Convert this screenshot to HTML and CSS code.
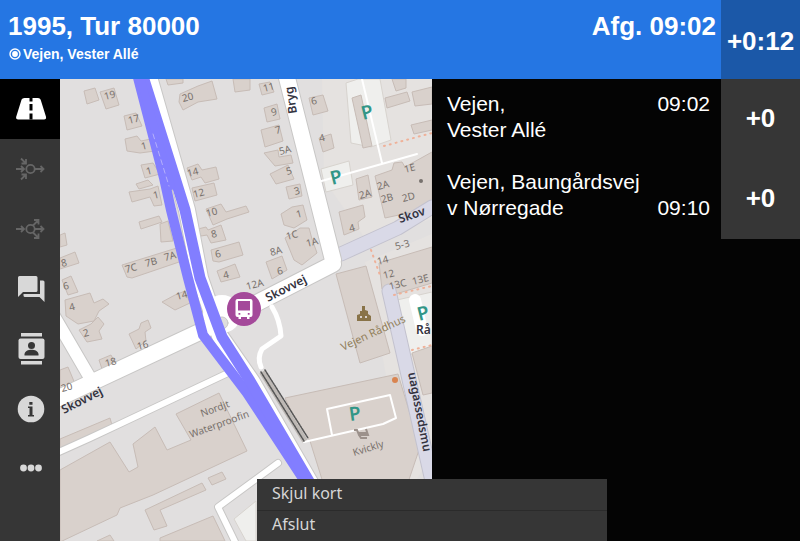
FILE: index.html
```html
<!DOCTYPE html>
<html lang="da">
<head>
<meta charset="utf-8">
<meta name="viewport" content="width=device-width, initial-scale=1">
<title>1995, Tur 80000</title>
<link rel="stylesheet" href="styles.css">
</head>
<body>
<header class="topbar">
  <div class="trip">
    <h1 class="trip-title">1995, Tur 80000</h1>
    <p class="trip-stop">
      <svg class="stop-mark" viewBox="0 0 12 12" aria-hidden="true"><circle cx="6" cy="6" r="5" fill="none" stroke="#fff" stroke-width="1.4"/><circle cx="6" cy="6" r="2.9" fill="#fff"/></svg>
      <span>Vejen, Vester Allé</span>
    </p>
  </div>
  <div class="departure">Afg. 09:02</div>
  <div class="deviation">+0:12</div>
</header>
<main class="content">
  <nav class="sidebar" aria-label="Menu">
    <button class="nav-button active" aria-label="Rute">
      <svg viewBox="0 0 32 24"><path fill="#fff" d="M9.500 1h13.500q2 0 2.700 1.800l5.300 17q.6 2.700-2 2.700H3.200q-2.600 0-2-2.700l5.300-17Q7.200 1 9.500 1z"/><path stroke="#000" stroke-width="3" d="M16 1v3.500M16 7v6.500M16 16.500v6"/></svg>
    </button>
    <button class="nav-button" aria-label="Ankomster" disabled>
      <svg viewBox="0 0 32 24" fill="none" stroke="#666" stroke-width="1.800"><circle cx="15.500" cy="12" r="4.200"/><path d="M1 12h8M6 9l3 3-3 3M20 12h8.500M25.500 9l3 3-3 3M6 1.500l5 5M11 2v4.500H6.500M6 22.500l5-5M6.500 17.500H11V22"/></svg>
    </button>
    <button class="nav-button" aria-label="Afgange" disabled>
      <svg viewBox="0 0 32 24" fill="none" stroke="#666" stroke-width="1.800"><circle cx="15.500" cy="12" r="4.200"/><path d="M1 12h8M6 9l3 3-3 3M20 12h8.500M25.500 9l3 3-3 3M18 8.500l5.500-5.500M19 3h4.500v4.500M18 15.500l5.500 5.500M19 21h4.500v-4.500"/></svg>
    </button>
    <button class="nav-button" aria-label="Beskeder">
      <svg viewBox="0 0 32 28"><path fill="#d8d8d8" d="M4.500 1H21q1.500 0 1.500 1.500v13q0 1.500-1.500 1.500H8l-5 5V2.500Q3 1 4.500 1zM25 5.500h3q1.500 0 1.500 1.500v20l-5-5H10q-1.500 0-1.500-1.500V19H25z"/></svg>
    </button>
    <button class="nav-button" aria-label="Kontakter">
      <svg viewBox="0 0 32 32"><path fill="#d8d8d8" d="M6 0h21v3.500H6zM6 28h21v3.500H6z"/><rect x="3.500" y="5.500" width="26" height="20.500" rx="2" fill="#d8d8d8"/><circle cx="16.500" cy="12.500" r="3.500" fill="#363636"/><path fill="#363636" d="M9.500 22.500v-1.200c0-3.200 4-4.600 7-4.600s7 1.400 7 4.600v1.200z"/></svg>
    </button>
    <button class="nav-button" aria-label="Information">
      <svg viewBox="0 0 32 28"><circle cx="16" cy="14" r="13.300" fill="#d8d8d8"/><path fill="#363636" d="M13 11.500h4.500v8.500H19v1.500h-6V20h1.500v-7H13zM14.300 7h3.200v2.800h-3.200z"/></svg>
    </button>
    <button class="nav-button" aria-label="Mere">
      <svg viewBox="0 0 32 10"><g fill="#d8d8d8"><circle cx="8.500" cy="4" r="3.400"/><circle cx="16" cy="4" r="3.400"/><circle cx="23.500" cy="4" r="3.400"/></g></svg>
    </button>
  </nav>
  <section class="map" aria-label="Kort">
    <svg class="map-drawing" viewBox="60 79 372 462" preserveAspectRatio="xMinYMin slice">
      <rect x="60" y="79" width="372" height="462" fill="#e1dfdf"/>
      <!-- light grounds -->
      <g fill="#e5e2e0">
        <path d="M322 79h110v140l-66 21-42-60z"/>
        <path d="M365 262l67-28v220l-24 40z"/>
      </g>
      <g fill="#efefed" stroke="#d7d3ce" stroke-width="1">
        <path d="M346 83l12-4h22l11 61-20 7-20-4z"/>
        <path d="M321 169l28-8 4 24-27 7z"/>
        <path d="M397 300l35-8v58l-24 5z"/>
        <path d="M234 519l22-18v40h-10z"/>
      </g>
      <g fill="#d9d1cc" stroke="#c7bcb6" stroke-width="1">
        <path d="M84 91l11-3 4 12-12 4zM100 92l14-4 5 17-13 4z"/>
        <path d="M166 79h17v4l-15 2zM180 94l18-8 14-5 5 18-19 3-15 8-4-8z"/>
        <path d="M233 79h17v11l-15 2z"/>
        <path d="M124 116l12-3 6 13-15 4zM125 139l12-3 4 5 10-2 4 12-15 2-13-2z"/>
        <path d="M141 165l12-2 7 11-15 4zM136 184l12-4 5 5-14 4zM129 192l21-3 8-3 4 19-8 1-4-9-18 5z"/>
        <path d="M139 222l20-6 3 6-21 7zM160 224l8-3 5 20-12 1z"/>
        <path d="M122 265l58-18 5 13-53 18-5-1z"/>
        <path d="M187 168l11-4 4 6 14-3 3 12-14 4-4-6-9 3zM192 188l22-5 3 12-22 6zM206 209l15-5 5 8 20-6 3 6-22 7-14 6zM198 229l8-2 2 3 13-5 5 15-15 3-4-8-6 1zM211 250l28-8 4 13-24 7-6-1zM217 271l18-7 5 13-19 5z"/>
        <path d="M60 235l5-2 2 12-7 2zM60 258l15-6 4 11-19 6zM62 280l9-4 7 16-10 3zM65 300l25-7 4 10 9-4 6 5-10 7-5 10-16 3-12-8z"/>
        <path d="M79 330l12-6 7-7 6 7-5 7 3 8-15 3zM129 334l10-5 2-6 7-3 3 8-6 4 1 9-10 8zM99 360l12-5 6 12-14 5zM60 370l8-3 10 24-18 7zM162 302l13-7 10-4 5 12-15 7z"/>
        <path d="M259 84l11-2 4 10-12 3zM264 108l13-4 3 15-13 3zM261 130l18-5 4 16-18 6zM264 153l14-3 1 7 12-2 2 8-18 3zM270 174l18-9 6 14-18 5zM286 187l14-3 2 12-13 3zM281 214l11-7 11-2 4 15-13 8-10-3z"/>
        <path d="M309 98l14-3 5 16-15 4zM319 138l12-4 3 14-11 4zM285 238l15-10 9 0 3 11 5 14-15 12-8-5zM266 262l16-6 5 14-15 9z"/>
        <path d="M352 98l9-3 11 51-9 2zM385 98l22-6 3 9-23 7zM392 79h14v9l-10 3zM412 92l20-5v17l-17 2zM411 125l21-5v10l-18 4z"/>
        <path d="M375 176l17-6 2-7 8-1 3 5 27-15v50l-10 8-37 8zM356 179l12-4 4 22-13 3zM339 212l24-7 2 12-7 5 1 7-15 6z"/>
        <path d="M379 263l53-16v36l-43 13-7-7zM336 274l30-8 24 87-30 10z"/>
        <path d="M412 353l20-7v47l-9 2z"/>
        <path d="M285 398l113-24 22 73-25 74H335l-25-80-16-24z"/>
        <path d="M60 439l50-21 3 11-44 21-9 1z"/>
        <path d="M60 470l50-28 19 30 9-5-5-23 22-17 12 23 24-10-15-26 43-21 28 58-94 44-33 13-3 7-57 27v-67z"/>
        <path d="M145 510l57-27 4 7-46 20 7 16-13 4zM208 478l14-6 4 7-14 6zM160 538l53-22 12 25h-65z"/>
        <path d="M97 541l13-6 4 6z"/>
      </g>
      <!-- roads -->
      <g fill="none" stroke-linecap="round" stroke-linejoin="round">
        <path d="M341 254l57-26 34-21M389 291l43 190" stroke="#c3c2ce" stroke-width="15"/>
        <path d="M341 254l57-26 34-21M389 291l43 190" stroke="#d9d9e7" stroke-width="13"/>
        <g stroke="#c8c7c6">
          <path d="M147 70l40 140 13 68 20 58 32 46 60 104M283 62l50 198M48 403l160-75 125-64" stroke-width="18"/>
          <path d="M54 316l39 67" stroke-width="14"/>
          <path d="M50 456l40-18 32-15 106-50M278 463l-60 44 22 45" stroke-width="8"/>
        </g>
        <g stroke="#fff">
          <path d="M147 70l40 140 13 68 20 58 32 46 60 104M283 62l50 198M48 403l160-75 125-64" stroke-width="16"/>
          <path d="M54 316l39 67" stroke-width="12"/>
          <path d="M50 456l40-18 32-15 106-50M278 463l-60 44 22 45" stroke-width="6"/>
          <path d="M272 307q8 13 9 29l-19 13q-5 9-1 18" stroke-width="5"/>
          <path d="M318 182l99-28M362 79l20 84" stroke-width="2"/>
          <path d="M304 442l79-18 13-6-6-23-63 14 5 26" stroke-width="2"/>
          <path d="M415 300l7 30" stroke-width="12"/>
        </g>
        <circle cx="222" cy="314" r="19" fill="#fff" stroke="none"/>
        <circle cx="222" cy="323" r="6" fill="#dedddd" stroke="#cac8c6"/>
        <path d="M262 372l43 69" stroke="#bdb8b4" stroke-width="6" stroke-linecap="butt"/>
        <path d="M261 372l43 69M265 370l43 68" stroke="#555" stroke-width="1.500" stroke-dasharray="2 1"/>
        <path d="M136 70l28 108 7 32 17 68 15 57 44 58 57 87" stroke="#827eff" stroke-width="10" stroke-linejoin="miter"/>
        <path d="M141 70l34 108 10 32 15 68 22 59 28 44 60 102" stroke="#827eff" stroke-width="11"/>
        <path d="M138 70l33 116" stroke="#827eff" stroke-width="8"/>
        <path d="M153 134l16 52" stroke="#b5b0fb" stroke-width="1" stroke-dasharray="5 4"/>
        <path d="M384 146l48-13M371 250l10 28M394 295l38-9M412 350l20-5" stroke="#efb199" stroke-width="2" stroke-dasharray="1 5"/>
      </g>
      <!-- house numbers -->
      <g class="house">
        <text transform="translate(105 100) rotate(-14)">19</text><text transform="translate(129 124) rotate(-14)">17</text>
        <text transform="translate(183 102) rotate(-14)">20</text><text transform="translate(142 150) rotate(-14)">1</text>
        <text transform="translate(147 175) rotate(-14)">1</text><text transform="translate(154 199) rotate(-14)">1</text>
        <text transform="translate(188 177) rotate(-14)">14</text><text transform="translate(194 198) rotate(-14)">12</text>
        <text transform="translate(207 217) rotate(-14)">10</text><text transform="translate(212 238) rotate(-14)">8</text>
        <text transform="translate(216 258) rotate(-14)">6</text><text transform="translate(224 279) rotate(-14)">4</text>
        <text transform="translate(126 273) rotate(-14)">7C</text><text transform="translate(146 267) rotate(-14)">7B</text><text transform="translate(165 261) rotate(-14)">7A</text>
        <text transform="translate(64 290) rotate(-14)">6</text><text transform="translate(70 311) rotate(-14)">4</text><text transform="translate(84 337) rotate(-14)">2</text>
        <text transform="translate(62 267) rotate(-14)">8</text><text transform="translate(62 392) rotate(-14)">20</text>
        <text transform="translate(106 367) rotate(-14)">18</text><text transform="translate(138 350) rotate(-14)">16</text><text transform="translate(177 300) rotate(-14)">14</text>
        <text transform="translate(264 92) rotate(-14)">11</text><text transform="translate(272 116) rotate(-14)">9</text><text transform="translate(276 134) rotate(-14)">7</text>
        <text transform="translate(280 155) rotate(-14)">5A</text><text transform="translate(287 175) rotate(-14)">5</text><text transform="translate(295 195) rotate(-14)">3</text>
        <text transform="translate(297 218) rotate(-14)">1</text><text transform="translate(287 240) rotate(-14)">1C</text><text transform="translate(307 247) rotate(-14)">1A</text>
        <text transform="translate(271 256) rotate(-14)">8A</text><text transform="translate(278 275) rotate(-14)">6</text><text transform="translate(247 290) rotate(-14)">12A</text>
        <text transform="translate(312 105) rotate(-14)">6</text><text transform="translate(320 142) rotate(-14)">4</text>
        <text transform="translate(360 199) rotate(-14)">2A</text><text transform="translate(378 190) rotate(-14)">2A</text><text transform="translate(382 203) rotate(-14)">2B</text>
        <text transform="translate(403 202) rotate(-14)">2D</text><text transform="translate(405 173) rotate(-14)">1E</text><text transform="translate(350 232) rotate(-14)">4</text>
        <text transform="translate(396 250) rotate(-14)">5-3</text><text transform="translate(378 265) rotate(-14)">14</text><text transform="translate(384 279) rotate(-14)">12</text>
        <text transform="translate(390 290) rotate(-14)">13C</text><text transform="translate(413 285) rotate(-14)">13E</text>
      </g>
      <g class="place">
        <text transform="translate(202 417) rotate(-20)">Nordjt</text>
        <text transform="translate(191 438) rotate(-20)">Waterproofin</text>
        <text transform="translate(354 456) rotate(-17)">Kvickly</text>
        <text class="townhall" transform="translate(343 351) rotate(-25)">Vejen Rådhus</text>
      </g>
      <g class="street">
        <text transform="translate(64 414) rotate(-27)">Skovvej</text>
        <text transform="translate(268 302) rotate(-27)">Skovvej</text>
        <text transform="translate(400 223) rotate(-18)">Skov</text>
        <text transform="translate(297 113) rotate(-99)">Bryg</text>
        <text transform="translate(408 373) rotate(79)">uagassedsmu</text>
        <text x="416" y="334">Rå</text>
      </g>
      <g class="parking">
        <text transform="translate(363 120) rotate(-14)">P</text><text transform="translate(332 185) rotate(-14)">P</text>
        <text transform="translate(419 321) rotate(-14)">P</text><text transform="translate(350 421) rotate(-8)">P</text>
      </g>
      <path d="M357 321v-6l3-1v-3h2v-5h3v4l3 1v3l3 2v5zM360 316v2h2v-2zM365 316v2h2v-2z" fill="#897348" fill-rule="evenodd"/>
      <path d="M354 430h3l2 5h9l-2-6M358 433h9M359 435l2 3h6" fill="none" stroke="#9c918b" stroke-width="2"/>
      <circle cx="395" cy="380" r="3" fill="#d98450"/><circle cx="421" cy="181" r="2" fill="#77716d"/>
      <!-- bus position -->
      <circle cx="244" cy="309" r="17" fill="#a4499a"/>
      <path fill="#fff" fill-rule="evenodd" d="M237.500 299h13q2 0 2 2v14q0 2-2 2h-1v2h-2.500v-2h-6v2h-2.500v-2h-1q-2 0-2-2v-14q0-2 2-2zm.5 2v9.500h12V301zm.500 12v1.800h1.800V313zm9.300 0v1.800h1.800V313z"/>
    </svg>
  </section>
  <section class="stops" aria-label="Stoppesteder">
    <ol class="stop-list">
      <li class="stop"><span>Vejen,<br>Vester Allé</span><time>09:02</time></li>
      <li class="stop stop-end"><span>Vejen, Baungårdsvej<br>v Nørregade</span><time>09:10</time></li>
    </ol>
  </section>
  <div class="delays"><div class="delay">+0</div><div class="delay">+0</div></div>
  <div class="menu">
    <button class="menu-item">Skjul kort</button>
    <button class="menu-item">Afslut</button>
  </div>
</main>
</body>
</html>
```
FILE: styles.css
```css
* { box-sizing: border-box; }
body {
  margin: 0;
  min-height: 100vh;
  display: flex;
  flex-direction: column;
  background: #040404;
  color: #fff;
  font-family: "Liberation Sans", Arial, sans-serif;
}
button { border: 0; margin: 0; padding: 0; background: none; color: inherit; font: inherit; }
.topbar {
  display: flex;
  background: #2576e3;
  font-size: 26px;
  font-weight: bold;
  line-height: 30px;
}
.trip { flex: 1; padding: 11px 8px 16px; }
.trip-title { margin: 0; font-size: 26px; line-height: 30px; }
.trip-stop { display: flex; align-items: center; gap: 1px; margin: 4px 0 0; font-size: 14px; line-height: 18px; }
.stop-mark { width: 14px; height: 12px; }
.departure { padding: 11px 5px 0 0; }
.deviation { width: 79px; display: flex; align-items: center; justify-content: center; padding-top: 2px; background: #1b58a8; }
.content {
  position: relative;
  flex: 1;
  display: grid;
  grid-template-columns: 60px 372fr 289fr 79px;
}
.sidebar { background: #363636; display: flex; flex-direction: column; }
.nav-button { height: 60px; display: flex; align-items: center; justify-content: center; padding: 0 0 1px 2px; }
.nav-button svg { width: 32px; }
.nav-button.active { background: #000; }
.map { position: relative; overflow: hidden; background: #e1dfdf; }
.map-drawing { position: absolute; inset: 0; width: 100%; height: 100%; }
.map text { font-family: "Noto Sans", sans-serif; }
.house { font-size: 10px; fill: #77706b; }
.place { font-size: 10px; fill: #77706b; }
.map .townhall { fill: #91805a; font-size: 11px; }
.street { font-size: 12px; font-weight: 600; fill: #34333f; }
.parking { font-size: 19px; font-weight: 600; fill: #329687; }
.stop-list { list-style: none; margin: 0; padding: 12px 11px 0 15px; font-size: 21px; line-height: 26px; }
.stop { display: flex; justify-content: space-between; margin-bottom: 26px; white-space: nowrap; }
.stop-end time { align-self: flex-end; }
.stop span { flex: 1; width: 0; }
.delays { align-self: start; background: #363636; }
.delay { height: 80px; display: flex; align-items: center; justify-content: center; padding-bottom: 2px; font-size: 26px; font-weight: bold; }
.menu {
  position: absolute;
  left: 257px;
  bottom: 0;
  width: 350px;
  background: #363636;
  color: #d6d6d6;
  font-family: "Noto Sans", sans-serif;
  font-size: 16px;
}
.menu-item { display: block; width: 100%; height: 31px; padding: 0 15px 4px; text-align: left; }
.menu-item + .menu-item { border-top: 1px solid #2b2b2b; }
```
